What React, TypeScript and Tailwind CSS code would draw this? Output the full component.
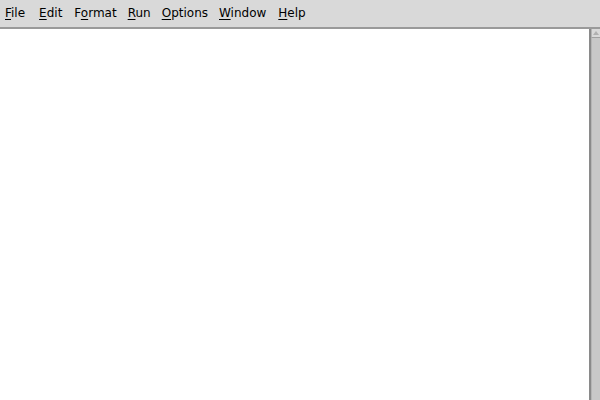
const menus = [
  { label: "File", u: 0, ml: "ml-[5px]" },
  { label: "Edit", u: 0, ml: "ml-[14px]" },
  { label: "Format", u: 1, ml: "ml-[12px]" },
  { label: "Run", u: 0, ml: "ml-[11px]" },
  { label: "Options", u: 0, ml: "ml-[11px]" },
  { label: "Window", u: 0, ml: "ml-[11px]" },
  { label: "Help", u: 0, ml: "ml-[12px]" },
];

export default function App() {
  return (
    <div className="w-[600px] h-[400px] flex flex-col bg-[#d9d9d9] overflow-hidden font-['DejaVu_Sans',sans-serif] text-[12px] text-black">
      {/* Menu bar */}
      <div className="h-[29px] flex items-center pb-[1px] border-b-2 border-[#9a9a9a] shrink-0">
        {menus.map((m) => (
          <span key={m.label} className={`leading-none ${m.ml}`}>
            {m.label.slice(0, m.u)}
            <span className="underline underline-offset-2">{m.label[m.u]}</span>
            {m.label.slice(m.u + 1)}
          </span>
        ))}
      </div>

      {/* Editor + scrollbar */}
      <div className="flex-1 flex">
        <div className="flex-1 bg-white" />
        <div className="w-[11px] flex flex-col border-l-2 border-[#8a8a8a] bg-[#d9d9d9]">
          <div className="h-[9px] border-b border-[#a0a0a0] border-l border-l-[#b5b5b5] flex items-center justify-center">
            <svg width="6" height="4" viewBox="0 0 6 4">
              <path d="M3 0 L6 4 L0 4 Z" fill="#b0b0b0" />
            </svg>
          </div>
          <div className="flex-1 border-l border-[#b5b5b5] bg-[#c8c8c8]" />
        </div>
      </div>
    </div>
  );
}
